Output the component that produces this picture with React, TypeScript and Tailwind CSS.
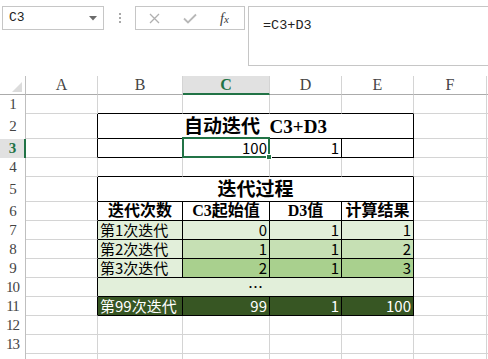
import React from "react";

const cjk = "font-['Noto_Sans_CJK_SC',sans-serif]";
const serifBold = "font-['Liberation_Serif','Noto_Sans_CJK_SC',serif] font-bold";
const mono = "font-['Liberation_Mono',monospace]";
const hdrFont = "font-['Liberation_Serif',serif]";

// cell border kinds
const grid = "border-r border-b border-[#d4d4d4]";
const edgeL = "border-r border-b border-r-black border-b-[#d4d4d4]";
const edgeT = "border-r border-b border-r-[#d4d4d4] border-b-black";
const tb = "border-r border-b border-black";

const num = `${cjk} text-[15px] leading-[18px] flex items-center justify-end pr-[2px]`;
const lbl = `${cjk} text-[15px] leading-[18px] flex items-center pl-[2px] whitespace-nowrap`;
const head = `${serifBold} text-[16px] leading-[18px] flex items-center justify-center whitespace-nowrap`;

function RowHead({ n, sel }: { n?: number; sel?: boolean }) {
  if (sel) {
    return (
      <div className={`border-r-2 border-r-[#217346] bg-[#e1e1e1] text-[#217346] font-bold ${hdrFont} text-[15px] tracking-[-1px] flex items-center justify-center`}>
        {n}
      </div>
    );
  }
  return (
    <div className={`border-r border-r-[#bfbfbf] text-[#444] ${hdrFont} text-[15px] tracking-[-1px] flex items-center justify-center`}>
      {n}
    </div>
  );
}

function ColHead({ l, sel }: { l: string; sel?: boolean }) {
  if (sel) {
    return (
      <div className={`border-r border-r-[#d4d4d4] border-b-2 border-b-[#217346] bg-[#e1e1e1] text-[#217346] font-bold ${hdrFont} text-[16px] flex items-center justify-center`}>
        {l}
      </div>
    );
  }
  return (
    <div className={`border-r border-b border-r-[#d4d4d4] border-b-[#ababab] text-[#444] ${hdrFont} text-[16px] flex items-center justify-center`}>
      {l}
    </div>
  );
}

function Blank({ c = grid }: { c?: string }) {
  return <div className={c} />;
}

function FormulaBar() {
  return (
    <div className="h-[76px] flex items-start pt-[6px] pl-[2px] bg-white">
      <div className="shrink-0 w-[102px] h-[24px] border border-[#c6c6c6] flex items-center justify-between pl-[6px] pr-[6px]">
        <span className={`${mono} text-[13px] text-[#222]`}>C3</span>
        <svg width="8" height="5" viewBox="0 0 8 5">
          <path d="M0 0 L8 0 L4 4.5 Z" fill="#6b6b6b" />
        </svg>
      </div>
      <div className="shrink-0 w-[31px] h-[24px] flex flex-col items-center justify-center gap-[2px]">
        <div className="w-[2px] h-[2px] bg-[#a8a8a8]" />
        <div className="w-[2px] h-[2px] bg-[#a8a8a8]" />
        <div className="w-[2px] h-[2px] bg-[#a8a8a8]" />
      </div>
      <div className="shrink-0 w-[110px] h-[24px] border border-[#c6c6c6] flex items-center">
        <div className="w-[24px] flex justify-end">
          <svg width="11" height="11" viewBox="0 0 11 11">
            <path d="M1 1 L10 10 M10 1 L1 10" stroke="#b0b0b0" strokeWidth="1.3" />
          </svg>
        </div>
        <div className="w-[50px] flex justify-center pl-[10px]">
          <svg width="14" height="11" viewBox="0 0 14 11">
            <path d="M1 5.5 L5 9.5 L13 1.5" stroke="#b8b8b8" strokeWidth="1.8" fill="none" />
          </svg>
        </div>
        <span className="font-['Liberation_Serif',serif] italic text-[14px] text-[#3a3a3a] pl-[10px]">
          f<span className="text-[11px]">x</span>
        </span>
      </div>
      <div className="shrink-0 ml-[3px] w-[260px] h-[60px] border border-[#c6c6c6] pl-[14px] pt-[4px]">
        <span className={`${mono} text-[13.5px] text-[#222]`}>=C3+D3</span>
      </div>
    </div>
  );
}

export default function App() {
  return (
    <div className="w-[488px] h-[359px] overflow-hidden bg-white relative">
      <FormulaBar />
      <div className="grid grid-cols-[26px_72px_85px_87px_72px_72px_73px_60px] grid-rows-[19px_19px_25px_19px_19px_25px_19px_19px_19px_19px_19px_19px_19px_19px_19px] text-black">
        {/* header row */}
        <div className="border-r border-b border-r-[#bfbfbf] border-b-[#ababab] flex items-end justify-end pr-[3px] pb-[2px]">
          <svg width="10" height="10" viewBox="0 0 10 10">
            <path d="M10 0 L10 10 L0 10 Z" fill="#dcdcdc" />
          </svg>
        </div>
        <ColHead l="A" />
        <ColHead l="B" />
        <ColHead l="C" sel />
        <ColHead l="D" />
        <ColHead l="E" />
        <ColHead l="F" />
        <ColHead l="" />

        {/* row 1 */}
        <RowHead n={1} />
        <Blank />
        <Blank c={edgeT} />
        <Blank c={edgeT} />
        <Blank c={edgeT} />
        <Blank c={edgeT} />
        <Blank />
        <Blank />

        {/* row 2 */}
        <RowHead n={2} />
        <Blank c={edgeL} />
        <div className={`${tb} col-span-4 ${serifBold} text-[19px] leading-[23px] flex items-center justify-center whitespace-pre`}>
          自动迭代  C3+D3
        </div>
        <Blank />
        <Blank />

        {/* row 3 */}
        <RowHead n={3} sel />
        <Blank c={edgeL} />
        <Blank c={tb} />
        <div className={`${tb} ${num} relative`}>
          100
          <div className="absolute -left-[1px] -top-[2px] -right-[1px] -bottom-[1px] border-2 border-[#217346] z-10">
            <div className="absolute -right-[4px] -bottom-[4px] w-[6px] h-[6px] bg-[#217346] border border-white" />
          </div>
        </div>
        <div className={`${tb} ${num}`}>1</div>
        <Blank c={tb} />
        <Blank />
        <Blank />

        {/* row 4 */}
        <RowHead n={4} />
        <Blank />
        <Blank c={edgeT} />
        <Blank c={edgeT} />
        <Blank c={edgeT} />
        <Blank c={edgeT} />
        <Blank />
        <Blank />

        {/* row 5 */}
        <RowHead n={5} />
        <Blank c={edgeL} />
        <div className={`${tb} col-span-4 ${serifBold} text-[19px] leading-[23px] flex items-center justify-center`}>
          迭代过程
        </div>
        <Blank />
        <Blank />

        {/* row 6 */}
        <RowHead n={6} />
        <Blank c={edgeL} />
        <div className={`${tb} ${head}`}>迭代次数</div>
        <div className={`${tb} ${head}`}>C3起始值</div>
        <div className={`${tb} ${head}`}>D3值</div>
        <div className={`${tb} ${head}`}>计算结果</div>
        <Blank />
        <Blank />

        {/* row 7 */}
        <RowHead n={7} />
        <Blank c={edgeL} />
        <div className={`${tb} ${lbl} bg-[#e2efda]`}>第1次迭代</div>
        <div className={`${tb} ${num} bg-[#e2efda]`}>0</div>
        <div className={`${tb} ${num} bg-[#e2efda]`}>1</div>
        <div className={`${tb} ${num} bg-[#e2efda]`}>1</div>
        <Blank />
        <Blank />

        {/* row 8 */}
        <RowHead n={8} />
        <Blank c={edgeL} />
        <div className={`${tb} ${lbl} bg-[#e2efda]`}>第2次迭代</div>
        <div className={`${tb} ${num} bg-[#c6e0b4]`}>1</div>
        <div className={`${tb} ${num} bg-[#c6e0b4]`}>1</div>
        <div className={`${tb} ${num} bg-[#c6e0b4]`}>2</div>
        <Blank />
        <Blank />

        {/* row 9 */}
        <RowHead n={9} />
        <Blank c={edgeL} />
        <div className={`${tb} ${lbl} bg-[#e2efda]`}>第3次迭代</div>
        <div className={`${tb} ${num} bg-[#a9d08e]`}>2</div>
        <div className={`${tb} ${num} bg-[#a9d08e]`}>1</div>
        <div className={`${tb} ${num} bg-[#a9d08e]`}>3</div>
        <Blank />
        <Blank />

        {/* row 10 */}
        <RowHead n={10} />
        <Blank c={edgeL} />
        <div className={`${tb} col-span-4 bg-[#e2efda] ${cjk} text-[15px] leading-[18px] flex items-center justify-center`}>
          …
        </div>
        <Blank />
        <Blank />

        {/* row 11 */}
        <RowHead n={11} />
        <Blank c={edgeL} />
        <div className={`${tb} ${lbl} bg-[#375623] text-white`}>第99次迭代</div>
        <div className={`${tb} ${num} bg-[#375623] text-white`}>99</div>
        <div className={`${tb} ${num} bg-[#375623] text-white`}>1</div>
        <div className={`${tb} ${num} bg-[#375623] text-white`}>100</div>
        <Blank />
        <Blank />

        {/* rows 12-14 */}
        {[12, 13, 14].map((n) => (
          <React.Fragment key={n}>
            <RowHead n={n < 14 ? n : undefined} />
            <Blank />
            <Blank />
            <Blank />
            <Blank />
            <Blank />
            <Blank />
            <Blank />
          </React.Fragment>
        ))}
      </div>
    </div>
  );
}
